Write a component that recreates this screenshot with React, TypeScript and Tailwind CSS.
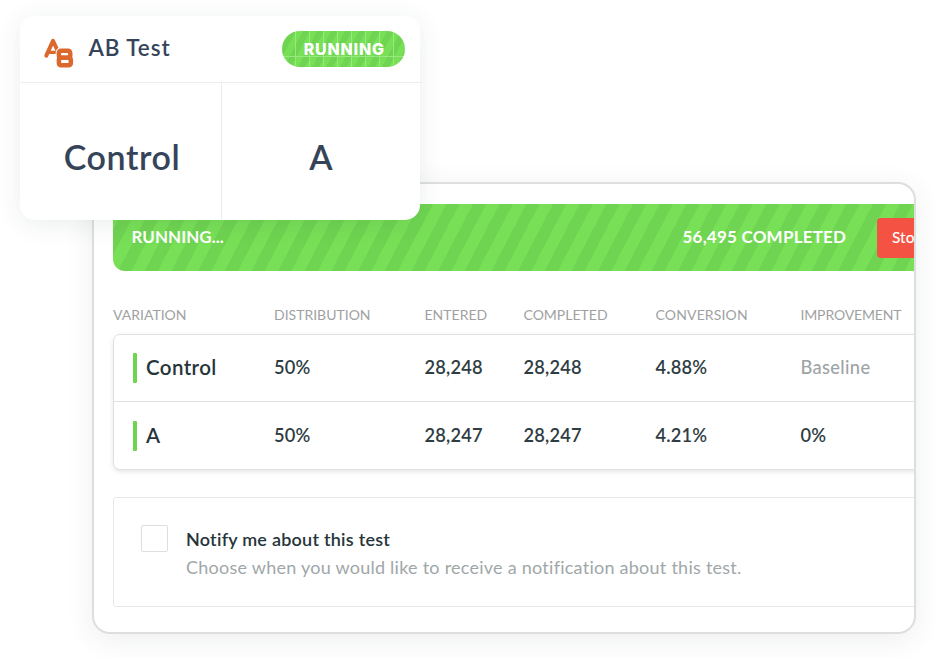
type Row = {
  name: string;
  distribution: string;
  entered: string;
  completed: string;
  conversion: string;
  improvement: string;
  muted?: boolean;
};

const rows: Row[] = [
  { name: 'Control', distribution: '50%', entered: '28,248', completed: '28,248', conversion: '4.88%', improvement: 'Baseline', muted: true },
  { name: 'A', distribution: '50%', entered: '28,247', completed: '28,247', conversion: '4.21%', improvement: '0%' },
];

const headings = [
  { label: 'VARIATION', spacing: '' },
  { label: 'DISTRIBUTION', spacing: '' },
  { label: 'ENTERED', spacing: '' },
  { label: 'COMPLETED', spacing: '' },
  { label: 'CONVERSION', spacing: 'tracking-[0.15px]' },
  { label: 'IMPROVEMENT', spacing: '-tracking-[0.15px]' },
];

function AbIcon() {
  return (
    <svg width="32" height="32" viewBox="0 0 32 32" fill="none" strokeLinecap="round" strokeLinejoin="round">
      <g stroke="#db682c" strokeWidth="4">
        <polyline points="3.3,17.6 10,2.9 15.5,14.5" />
        <line x1="7" y1="14.4" x2="14" y2="14.4" strokeWidth="3.4" />
      </g>
      <rect x="12.7" y="9.5" width="18.5" height="21.4" rx="5" fill="#fff" />
      <g stroke="#db682c" strokeWidth="4.5">
        <rect x="15.9" y="12.7" width="11.3" height="7.1" rx="2" />
        <rect x="15.9" y="19.8" width="11.9" height="7.4" rx="2" />
      </g>
    </svg>
  );
}

function TableRow({ row }: { row: Row }) {
  return (
    <div className="grid h-[67px] grid-cols-[160px_150.5px_99px_132px_145px_160px] items-center text-[18.25px] font-semibold tracking-[0.2px] text-[#2f3d43]">
      <div className="flex items-center gap-[9px] pl-[19px]">
        <span className="h-[30px] w-1 rounded-[1px] bg-[#6dd550]" />
        <span className="-mt-px text-[20.5px] font-semibold tracking-[0.4px] text-[#26353a]">{row.name}</span>
      </div>
      <div>{row.distribution}</div>
      <div>{row.entered}</div>
      <div>{row.completed}</div>
      <div>{row.conversion}</div>
      <div className={row.muted ? 'font-medium tracking-[0.35px] text-[#9da4a6]' : ''}>{row.improvement}</div>
    </div>
  );
}

function ResultsPanel() {
  return (
    <section className="ml-[92px] h-[452px] w-[824px] overflow-hidden rounded-[18px] border-2 border-[#dedede] bg-white pt-5 pl-[19px] shadow-[0_6px_28px_rgba(40,70,60,0.09)]">
      <div className="w-[900px]">
        <div className="flex h-[67px] items-center rounded-[12px] bg-[repeating-linear-gradient(117.6deg,#78e057_0px,#78e057_11.7px,#6fd451_11.9px,#6fd451_23.5px,#78e057_23.63px)] pl-[18.5px] text-[17px] font-bold text-white">
          <span className="-mt-0.5 w-[551px]">RUNNING...</span>
          <span className="-mt-0.5 w-[194.5px] tracking-[0.22px]">56,495 COMPLETED</span>
          <button className="h-10 rounded-[4px] bg-[#f45343] px-[15px] text-[15.5px] font-medium">Stop</button>
        </div>
        <div className="grid h-[63px] grid-cols-[161px_150.5px_99px_132px_145px_160px] items-end pb-[10px] text-[14px] leading-[18px] text-[#a0a2a2]">
          {headings.map((h) => (
            <span key={h.label} className={h.spacing}>{h.label}</span>
          ))}
        </div>
        <div className="divide-y divide-[#e0e1e1] rounded-[7px] border border-[#e0e1e1] bg-white shadow-[0_2px_5px_rgba(0,0,0,0.1)]">
          {rows.map((r) => (
            <TableRow key={r.name} row={r} />
          ))}
        </div>
        <div className="mt-[27px] flex h-[110px] rounded-[3px] border border-[#e6e7e7] pt-[27px] pl-[27px]">
          <span className="size-[27px] rounded-[2px] border border-[#dddede]" />
          <div className="ml-[18px] text-[18px] leading-7">
            <p className="font-semibold tracking-[0.24px] text-[#26353a]">Notify me about this test</p>
            <p className="tracking-[0.25px] text-[#a0a7a9]">Choose when you would like to receive a notification about this test.</p>
          </div>
        </div>
      </div>
    </section>
  );
}

function TestCard() {
  return (
    <section className="absolute top-4 left-5 flex h-[204px] w-[400px] flex-col rounded-[15px] bg-white text-[#36445a] shadow-[0_4px_26px_rgba(30,60,50,0.09)]">
      <header className="flex h-[66px] items-center pr-[15px] pl-[23px]">
        <div className="mt-[9px]">
          <AbIcon />
        </div>
        <h1 className="-mt-[3px] ml-[13.5px] flex-1 text-[22.5px] font-semibold tracking-[0.9px]">AB Test</h1>
        <span className="flex h-9 w-[123px] items-center justify-center rounded-full bg-[linear-gradient(#97e87d,#97e87d),repeating-linear-gradient(90deg,transparent_0px,transparent_13px,#97e87d_13px,#97e87d_14px),repeating-linear-gradient(117.6deg,#78e057_0px,#78e057_6px,#6fd451_6.4px,#6fd451_12.4px)] bg-[size:100%_1px,100%_100%,100%_100%] bg-[position:0_25px,0_0,0_0] bg-no-repeat pl-[1.5px] font-['Inter',sans-serif] text-[16px] font-extrabold tracking-[0.8px] text-white">
          RUNNING
        </span>
      </header>
      <div className="-mr-0.5 ml-px h-px bg-[#ebecec]" />
      <div className="grid flex-1 grid-cols-[202px_198px] text-[34px] font-semibold">
        <div className="flex items-center justify-center border-r border-[#ebecec] tracking-[0.6px]">
          <span className="mt-2.5 ml-[3px]">Control</span>
        </div>
        <div className="flex items-center justify-center">
          <span className="mt-2.5">A</span>
        </div>
      </div>
    </section>
  );
}

export default function App() {
  return (
    <main className="relative h-[658px] w-[936px] overflow-hidden bg-white pt-[182px] font-['Lato',sans-serif]">
      <ResultsPanel />
      <TestCard />
    </main>
  );
}
